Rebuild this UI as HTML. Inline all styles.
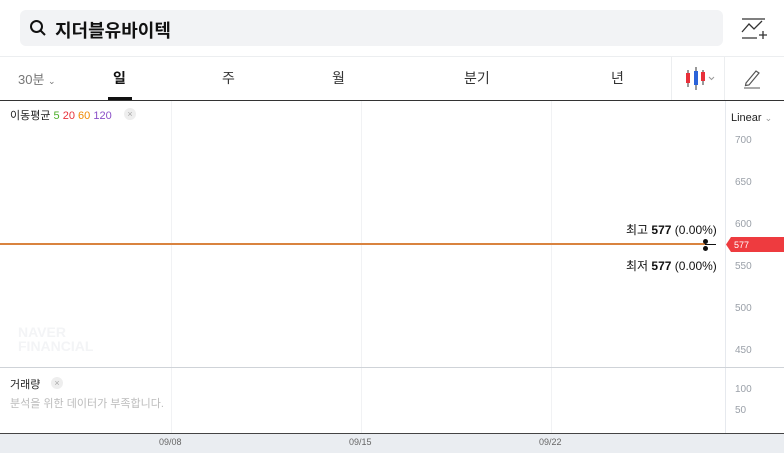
<!DOCTYPE html>
<html><head><meta charset="utf-8"><style>
*{margin:0;padding:0;box-sizing:border-box}
body{width:784px;height:453px;overflow:hidden;background:#fff;font-family:"Liberation Sans","Noto Sans CJK KR",sans-serif;position:relative}
.a{position:absolute}
.ax{font-size:10px;color:#9aa0a8;left:735px}
</style></head><body>
<div class="a" style="left:20px;top:10px;width:703px;height:36px;background:#f2f3f5;border-radius:6px"></div>
<svg class="a" style="left:29px;top:19px" width="18" height="18" viewBox="0 0 18 18"><circle cx="7.5" cy="7.5" r="5.5" fill="none" stroke="#111" stroke-width="2"/><path d="M11.5 11.5L16 16" stroke="#111" stroke-width="2"/></svg>
<div class="a" style="left:55px;top:17px;font-size:18px;font-weight:bold;color:#111">지더블유바이텍</div>
<svg class="a" style="left:740px;top:18px" width="28" height="22" viewBox="0 0 28 22"><path d="M2 1H25M2 20H17M2 14L9 6L14 11L22 3" fill="none" stroke="#333" stroke-width="1.3"/><path d="M23 13V21M19 17H27" stroke="#333" stroke-width="1.3"/></svg>
<div class="a" style="left:0;top:56px;width:784px;height:1px;background:#eceef0"></div>
<div class="a" style="left:18px;top:69px;font-size:13px;color:#777">30분 <span style="font-size:9px">⌄</span></div>
<div class="a" style="left:113px;top:68px;font-size:14px;font-weight:bold;color:#111">일</div>
<div class="a" style="left:108px;top:97px;width:24px;height:4px;background:#111"></div>
<div class="a" style="left:222px;top:68px;font-size:14px;color:#333">주</div>
<div class="a" style="left:332px;top:68px;font-size:14px;color:#333">월</div>
<div class="a" style="left:464px;top:68px;font-size:14px;color:#333">분기</div>
<div class="a" style="left:611px;top:68px;font-size:14px;color:#333">년</div>
<div class="a" style="left:671px;top:57px;width:1px;height:43px;background:#eceef0"></div>
<div class="a" style="left:724px;top:57px;width:1px;height:43px;background:#eceef0"></div>
<svg class="a" style="left:684px;top:67px" width="36" height="24" viewBox="0 0 36 24"><path d="M4 3V20M12 0V23M19 3V18" stroke-width="1" stroke="#333"/><rect x="2" y="6" width="4" height="10" fill="#e8303a"/><rect x="10" y="4" width="4" height="14" fill="#2a63d9"/><rect x="17" y="5" width="4" height="9" fill="#e8303a"/><path d="M25 10L27.5 12.5L30 10" fill="none" stroke="#999"/></svg>
<svg class="a" style="left:742px;top:67px" width="20" height="22" viewBox="0 0 20 22"><path d="M4 16L14 4L17 6L7 18L3.5 18.5Z" fill="none" stroke="#555" stroke-width="1.2"/><path d="M2 21H18" stroke="#555"/></svg>
<div class="a" style="left:0;top:100px;width:784px;height:1px;background:#333"></div>
<div class="a" style="left:171px;top:101px;width:1px;height:332px;background:#f1f2f4"></div>
<div class="a" style="left:361px;top:101px;width:1px;height:332px;background:#f1f2f4"></div>
<div class="a" style="left:551px;top:101px;width:1px;height:332px;background:#f1f2f4"></div>
<div class="a" style="left:725px;top:101px;width:1px;height:332px;background:#e6e9ee"></div>
<div class="a" style="left:10px;top:107px;font-size:11px;color:#222">이동평균 <span style="color:#4caf2a">5</span> <span style="color:#e8303a">20</span> <span style="color:#f08a00">60</span> <span style="color:#8a4fc8">120</span></div>
<div class="a" style="left:124px;top:108px;width:12px;height:12px;border-radius:6px;background:#eee;color:#aaa;font-size:9px;text-align:center;line-height:12px">×</div>
<div class="a" style="left:731px;top:112px;font-size:11px;color:#222">Linear <span style="color:#999;font-size:9px">⌄</span></div>
<div class="a ax" style="top:135px">700</div>
<div class="a ax" style="top:177px">650</div>
<div class="a ax" style="top:219px">600</div>
<div class="a ax" style="top:261px">550</div>
<div class="a ax" style="top:303px">500</div>
<div class="a ax" style="top:345px">450</div>
<div class="a" style="left:0;top:243px;width:705px;height:2px;background:#d9833f"></div>
<div class="a" style="left:705px;top:244px;width:11px;height:1px;background:#111"></div>
<div class="a" style="left:703px;top:239px;width:5px;height:5px;border-radius:3px;background:#111"></div>
<div class="a" style="left:703px;top:246px;width:5px;height:5px;border-radius:3px;background:#111"></div>
<div class="a" style="left:626px;top:221px;font-size:12px;color:#111">최고 <b>577</b> (0.00%)</div>
<div class="a" style="left:626px;top:257px;font-size:12px;color:#111">최저 <b>577</b> (0.00%)</div>
<svg class="a" style="left:726px;top:237px" width="58" height="15"><path d="M0 7.5L5 0H58V15H5Z" fill="#ee3b3f"/><text x="8" y="11" font-size="9" fill="#fff" font-family="Liberation Sans">577</text></svg>
<div class="a" style="left:18px;top:325px;font-size:14px;font-weight:bold;color:#f3f4f6;line-height:14px">NAVER<br>FINANCIAL</div>
<div class="a" style="left:0;top:367px;width:784px;height:1px;background:#cfd3d8"></div>
<div class="a" style="left:10px;top:376px;font-size:11px;color:#222">거래량</div>
<div class="a" style="left:51px;top:377px;width:12px;height:12px;border-radius:6px;background:#eee;color:#aaa;font-size:9px;text-align:center;line-height:12px">×</div>
<div class="a" style="left:10px;top:395px;font-size:11px;color:#bbb">분석을 위한 데이터가 부족합니다.</div>
<div class="a ax" style="top:384px">100</div>
<div class="a ax" style="top:405px">50</div>
<div class="a" style="left:0;top:433px;width:784px;height:20px;background:#eaedf1;border-top:1px solid #444"></div>
<div class="a" style="left:159px;top:437px;font-size:9px;color:#666">09/08</div>
<div class="a" style="left:349px;top:437px;font-size:9px;color:#666">09/15</div>
<div class="a" style="left:539px;top:437px;font-size:9px;color:#666">09/22</div>
</body></html>
